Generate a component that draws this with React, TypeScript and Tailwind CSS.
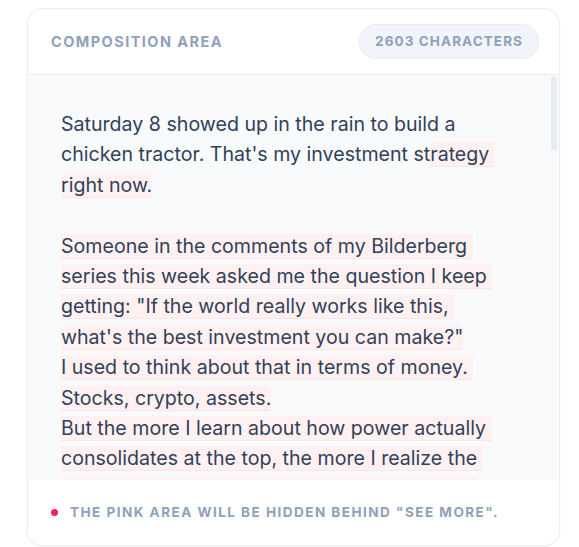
const before = 'Saturday 8 showed up in the rain to build a chicken tractor. That\'s my investment st';
const after =
  'rategy right now.\n\nSomeone in the comments of my Bilderberg series this week asked me the question I keep getting: "If the world really works like this, what\'s the best investment you can make?"\nI used to think about that in terms of money. Stocks, crypto, assets.\nBut the more I learn about how power actually consolidates at the top, the more I realize the smartest thing I can do is to build something real with my hands and the people around me.';

export default function App() {
  return (
    <div className="min-h-[547px] bg-white pl-[27px] pr-[19px] pt-[8px] font-['Inter',sans-serif]">
      <section className="flex h-[538px] flex-col overflow-hidden rounded-2xl border border-slate-200/70 bg-white shadow-[0_1px_3px_rgba(15,23,42,0.04)]">
        <header className="flex h-[66px] shrink-0 items-center justify-between border-b border-slate-200/70 pl-[23px] pr-[20px]">
          <h2 className="text-[14.5px] font-bold uppercase tracking-[0.1em] text-slate-400">Composition area</h2>
          <span className="rounded-full border border-slate-200/70 bg-slate-100 px-[15px] py-[6px] text-[13.5px] font-bold uppercase tracking-[0.08em] text-slate-400">
            2603 characters
          </span>
        </header>
        <div className="relative flex-1 overflow-hidden bg-slate-50">
          <p className="w-[478px] whitespace-pre-wrap pl-[33px] pt-[34px] text-[19.6px] leading-[30.4px] text-slate-700">
            {before}
            <span className="border-b border-rose-100 bg-rose-50 box-decoration-clone">{after}</span>
          </p>
          <div className="absolute right-[2px] top-[1px] h-[75px] w-[6px] rounded-full bg-slate-200/80" />
        </div>
        <footer className="flex h-[65px] shrink-0 items-center gap-[12px] bg-white pl-[23px]">
          <span className="h-[7px] w-[7px] rounded-full bg-rose-500" />
          <p className="text-[13.5px] font-bold uppercase tracking-[0.11em] text-slate-400">
            The pink area will be hidden behind "see more".
          </p>
        </footer>
      </section>
    </div>
  );
}
